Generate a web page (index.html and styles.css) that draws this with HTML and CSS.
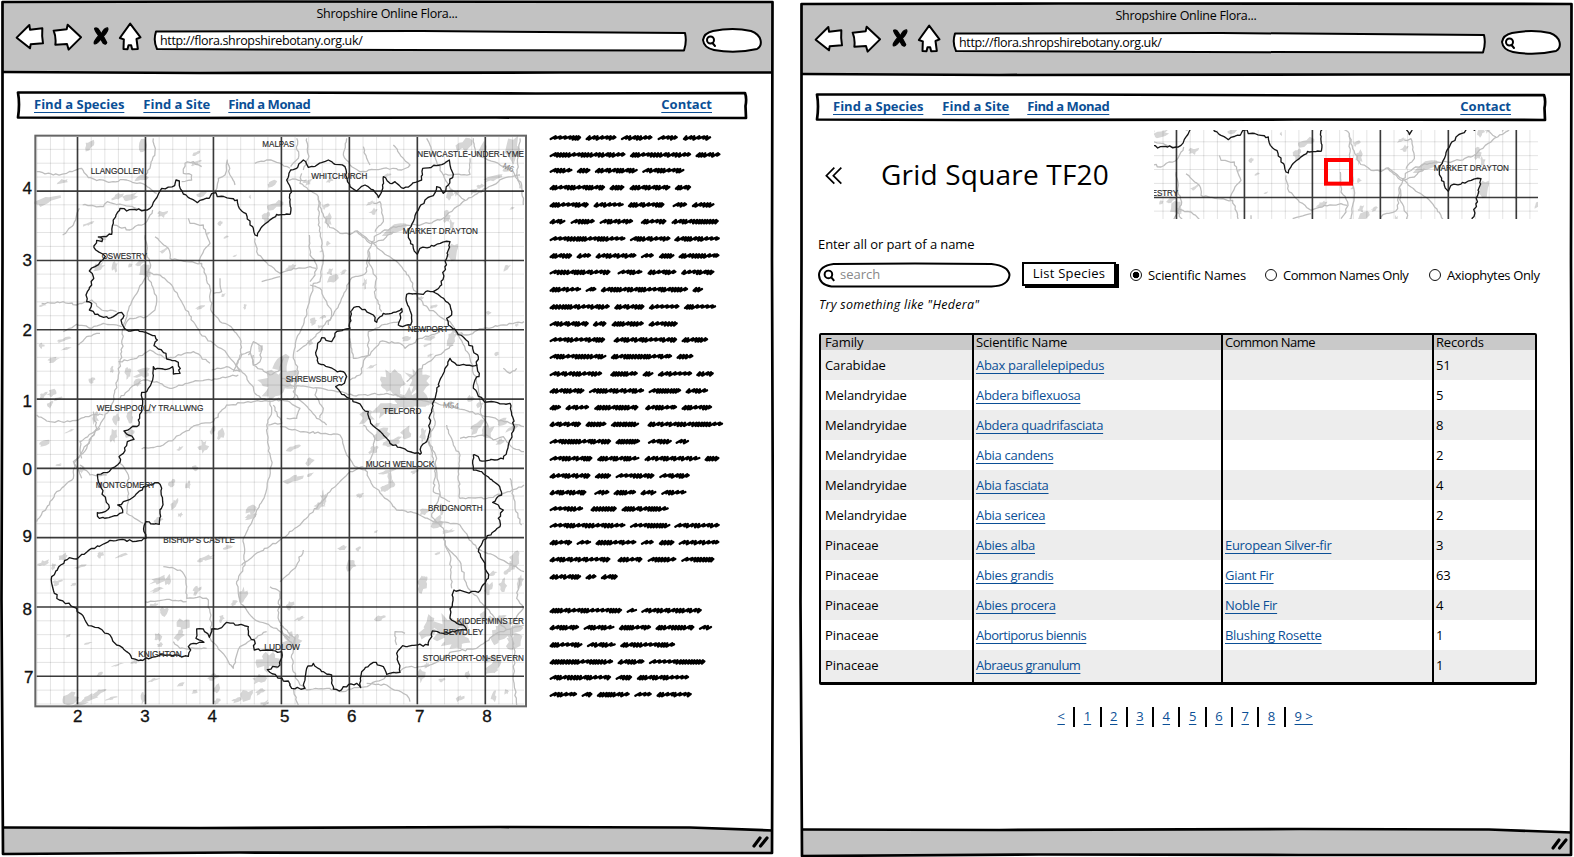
FILE: index.html
```html
<!DOCTYPE html>
<html lang="en">
<head>
<meta charset="utf-8">
<title>Shropshire Online Flora</title>
<link rel="stylesheet" href="styles.css">
</head>
<body>
<svg class="defs" aria-hidden="true">
  <symbol id="i-back" viewBox="45 66 90 90"><path d="M50 113 88 75 90 89 127 85Q125 108 129 130L92 133 90 145Z"/></symbol>
  <symbol id="i-forward" viewBox="155 66 90 90"><path d="M160 92 199 88 202 74 242 112 205 149 200 132 165 134Q168 112 160 92Z"/></symbol>
  <symbol id="i-stop" viewBox="275 71 60 75"><path class="ink" d="M286 84Q294 80 301 92L306 101Q316 81 325 83 329 90 312 108L322 127Q320 135 312 129L304 116Q293 133 285 130 282 124 298 106 285 88 286 84Z"/></symbol>
  <symbol id="i-home" viewBox="351 66 80 90"><path d="M390 71 421 112 409 117 413 147 396 148 393 136 385 136 382 148 370 147 371 118 359 114Z"/></symbol>
  <symbol id="i-lens" viewBox="0 0 36 36"><circle cx="15" cy="15" r="10.5"/><path d="M23 23 31 33"/></symbol>
  <symbol id="frame" viewBox="0 0 774 857">
    <path class="chrome" d="M3 2 772.500 2 772 73 3 72Z"/>
    <path class="chrome" d="M3 827.500 450 827.300 700 827 772 830.500V853L3 853Z"/>
    <path class="line" d="M2.500 2 260 1.500 772.500 2 772 260 773 560 772 853 500 853 240 852.500 3 854 1.500 600 2.500 260Z"/>
    <path class="line" d="M3 72 200 73 560 72.500 772.500 72.500"/>
    <path class="line" d="M3 827.500 200 828 500 827 690 827.500 772.500 830.500"/>
    <path class="grip" d="M754 846 760 838M760.500 846 767 838"/>
  </symbol>
  <symbol id="navbox" viewBox="0 0 732 30"><path class="line" d="M2 2.500 250 2.500 520 3.500 729 3Q731 8 729.500 16L730 28 480 27.500 150 28 2 27.500Q4 14 2 2.500Z"/></symbol>
</svg>

<main class="board">
  <section class="window">
    <svg class="frame"><use href="#frame"/></svg>
    <header class="title">Shropshire Online Flora...</header>
    <div class="toolbar">
      <svg class="ico"><use href="#i-back"/></svg>
      <svg class="ico forward"><use href="#i-forward"/></svg>
      <svg class="ico stop"><use href="#i-stop"/></svg>
      <svg class="ico home"><use href="#i-home"/></svg>
      <div class="url"><svg viewBox="0 0 536 24"><path d="M4 2.500 270 2 533 4Q535 13 532 21.500L250 21 5 20Q1 12 4 2.500Z"/></svg><span>http://flora.shropshirebotany.org.uk/</span></div>
      <svg class="quick" viewBox="0 0 62 27"><path d="M12 4Q32 0 50 4 58 7 59.500 13 61 19 56 22 34 27 13 23 3 21 2 13 3 6 12 4Z"/><circle cx="9.500" cy="13" r="3.500"/><path d="M11.500 16 14 19"/></svg>
    </div>
    <nav class="nav">
      <svg class="navbox" preserveAspectRatio="none"><use href="#navbox"/></svg>
      <a>Find a Species</a><a class="site">Find a Site</a><a class="monad">Find a Monad</a><a class="contact">Contact</a>
    </nav>
    <div class="content split">
      <svg class="map" viewBox="-30 0 1590 1830">
        <g id="county"></g>
        <g class="axis" id="axis"></g>
      </svg>
      <svg class="blurb" id="blurb" viewBox="0 0 600 1740"></svg>
    </div>
  </section>

  <section class="window second">
    <svg class="frame"><use href="#frame"/></svg>
    <header class="title">Shropshire Online Flora...</header>
    <div class="toolbar">
      <svg class="ico"><use href="#i-back"/></svg>
      <svg class="ico forward"><use href="#i-forward"/></svg>
      <svg class="ico stop"><use href="#i-stop"/></svg>
      <svg class="ico home"><use href="#i-home"/></svg>
      <div class="url"><svg viewBox="0 0 536 24"><path d="M4 2.500 270 2 533 4Q535 13 532 21.500L250 21 5 20Q1 12 4 2.500Z"/></svg><span>http://flora.shropshirebotany.org.uk/</span></div>
      <svg class="quick" viewBox="0 0 62 27"><path d="M12 4Q32 0 50 4 58 7 59.500 13 61 19 56 22 34 27 13 23 3 21 2 13 3 6 12 4Z"/><circle cx="9.500" cy="13" r="3.500"/><path d="M11.500 16 14 19"/></svg>
    </div>
    <nav class="nav">
      <svg class="navbox" preserveAspectRatio="none"><use href="#navbox"/></svg>
      <a>Find a Species</a><a class="site">Find a Site</a><a class="monad">Find a Monad</a><a class="contact">Contact</a>
    </nav>
    <div class="content">
      <div class="heading">
        <svg class="chevrons" viewBox="0 0 54 54"><path d="M28 2 4 26 28 50M49 2 25 26 49 50"/></svg>
        <h1>Grid Square TF20</h1>
        <svg class="minimap" viewBox="309 204 1152 267"><use href="#county"/><rect class="pick" x="825" y="294" width="75" height="71"/></svg>
      </div>
      <p class="prompt">Enter all or part of a name</p>
      <div class="controls">
        <div class="search"><svg class="pill" viewBox="0 0 193 26"><path d="M16 2Q100 1 174 2 191 4 192 13 191 24 174 24.500L14 24.500Q2 23 1.500 13 2 4 16 2Z"/></svg><svg class="lens"><use href="#i-lens"/></svg><span>search</span></div>
        <div class="button">List Species</div>
        <span class="radio"><i class="dot on"></i><b class="r1">Scientific Names</b></span>
        <span class="radio two"><i class="dot"></i><b class="r2">Common Names Only</b></span>
        <span class="radio three"><i class="dot"></i><b class="r3">Axiophytes Only</b></span>
      </div>
      <p class="hint">Try something like "Hedera"</p>
      <table class="grid">
        <colgroup><col class="c1"><col class="c2"><col class="c3"><col class="c4"></colgroup>
        <thead><tr><th>Family</th><th>Scientific Name</th><th class="tight">Common Name</th><th>Records</th></tr></thead>
        <tbody>
          <tr><td>Carabidae</td><td><a>Abax parallelepipedus</a></td><td></td><td>51</td></tr>
          <tr><td>Melandryidae</td><td><a>Abdera biflexuosa</a></td><td></td><td>5</td></tr>
          <tr><td>Melandryidae</td><td><a>Abdera quadrifasciata</a></td><td></td><td>8</td></tr>
          <tr><td>Melandryidae</td><td><a>Abia candens</a></td><td></td><td>2</td></tr>
          <tr><td>Melandryidae</td><td><a>Abia fasciata</a></td><td></td><td>4</td></tr>
          <tr><td>Melandryidae</td><td><a>Abia sericea</a></td><td></td><td>2</td></tr>
          <tr><td>Pinaceae</td><td><a>Abies alba</a></td><td><a>European Silver-fir</a></td><td>3</td></tr>
          <tr><td>Pinaceae</td><td><a>Abies grandis</a></td><td><a>Giant Fir</a></td><td>63</td></tr>
          <tr><td>Pinaceae</td><td><a>Abies procera</a></td><td><a>Noble Fir</a></td><td>4</td></tr>
          <tr><td>Pinaceae</td><td><a class="tight">Abortiporus biennis</a></td><td><a>Blushing Rosette</a></td><td>1</td></tr>
          <tr><td>Pinaceae</td><td><a class="tight">Abraeus granulum</a></td><td></td><td>1</td></tr>
        </tbody>
      </table>
      <div class="pager"><span><a>&lt;</a></span><span><a>1</a></span><span><a>2</a></span><span><a>3</a></span><span><a>4</a></span><span><a>5</a></span><span><a>6</a></span><span><a>7</a></span><span><a>8</a></span><span class="last"><a>9 &gt;</a></span></div>
    </div>
  </section>
</main>
<script src="map.js"></script>
</body>
</html>
```
FILE: styles.css
```css
* { box-sizing: border-box; }
body { margin: 0; background: #fff; color: #000; font: 500 13px/18px "Open Sans", "Noto Sans", sans-serif; overflow: hidden; }
.defs { position: absolute; width: 0; height: 0; }
.board { display: flex; gap: 25px; width: 1574px; height: 857px; overflow: hidden; }
.window { position: relative; width: 774px; height: 857px; flex: none; display: flex; flex-direction: column; }
.second { margin-top: 2px; }
.frame { position: absolute; left: 0; top: 0; width: 774px; height: 857px; z-index: -1; }
.chrome { fill: #c2c2c2; }
.line { fill: none; stroke: #000; stroke-width: 2.7; stroke-linejoin: round; }
.grip { fill: none; stroke: #000; stroke-width: 3.2; stroke-linecap: round; }
.title { height: 27px; padding-top: 5px; text-align: center; font-size: 12.5px; letter-spacing: -.25px; }
.toolbar { height: 46px; display: flex; padding: 0 0 0 15px; align-items: flex-start; }
.toolbar svg { fill: #fff; stroke: #000; stroke-linejoin: round; stroke-linecap: round; }
.ico { width: 30px; height: 30px; margin-top: -5px; stroke-width: 6; flex: none; }
.forward { margin-left: 7px; }
.stop { width: 20px; height: 25px; margin: -3px 0 0 9px; stroke-width: 4; }
.toolbar .ink { fill: #000; }
.ink { fill: #000; }
.home { width: 27px; margin-left: 6px; }
.url { position: relative; width: 536px; height: 24px; margin: 2px 0 0 8px; padding: 3px 0 0 8px; flex: none; font-size: 12.5px; letter-spacing: -.34px; }
.url svg { position: absolute; left: 0; top: 0; width: 536px; height: 24px; stroke-width: 2; z-index: -1; }
.quick { width: 62px; height: 27px; margin: 0 0 0 13px; stroke-width: 2; }
.nav { position: relative; height: 30px; margin: 17px 0 0 16px; width: 732px; display: flex; padding: 5px 0 0 18px; font-weight: 700; flex: none; }
.navbox { position: absolute; left: 0; top: 0; width: 732px; height: 30px; z-index: -1; }
a { color: #0b4f96; text-decoration: underline; text-decoration-thickness: 1px; text-underline-offset: 3px; text-decoration-skip-ink: none; white-space: nowrap; }
.site { margin-left: 19px; }
.monad { margin-left: 18px; letter-spacing: -.45px; }
.contact { margin-left: auto; margin-right: 36px; }
.split { display: flex; }
.map { width: 530px; height: 610px; margin: 5px 0 0 10px; flex: none; }
.minor { stroke: #000; stroke-opacity: .11; stroke-width: 3; }
.major { stroke: #000; stroke-opacity: .75; stroke-width: 5; }
.edge { fill: none; stroke: #666; stroke-width: 6; }
.roads { fill: none; stroke: #bdbdbd; stroke-width: 3.8; stroke-linejoin: round; }
.towns { fill: #d6d6d6; }
.border { fill: none; stroke: #161616; stroke-width: 4; stroke-linejoin: round; }
.places { font: 400 25px "Liberation Sans", Arial, sans-serif; fill: #2b2b2b; stroke: #2b2b2b; stroke-width: .5; }
.places .road { fill: #888; stroke: none; }
.axis { font: 400 51px "Liberation Sans", Arial, sans-serif; fill: #111; stroke: #111; stroke-width: 1; text-anchor: middle; }
.blurb { width: 200px; height: 580px; margin: 5px 0 0 0; flex: none; }
.blurb path { fill: none; stroke: #000; stroke-width: 7; stroke-linejoin: round; stroke-linecap: round; }
.content { flex: none; }
.second .content { padding-left: 18px; }
.heading { display: flex; align-items: flex-start; margin-top: 8px; height: 89px; }
.chevrons { width: 18px; height: 18px; margin: 37px 0 0 8px; fill: none; stroke: #000; stroke-width: 5; }
h1 { margin: 22px 0 0 38px; width: 273px; font-size: 28px; line-height: 44px; font-weight: 500; white-space: nowrap; letter-spacing: .2px; }
.minimap { width: 384px; height: 89px; }
.pick { fill: none; stroke: #f00; stroke-width: 12; }
p { margin: 0; }
.prompt { margin-top: 16px; height: 18px; letter-spacing: -.08px; padding-left: 1px; }
.controls { display: flex; height: 28px; margin-top: 8px; align-items: center; white-space: nowrap; }
.search { position: relative; width: 194px; height: 26px; padding: 3px 0 0 23px; color: #888; }
.pill { position: absolute; left: 0; top: 0; width: 194px; height: 26px; fill: #fff; stroke: #000; stroke-width: 2; z-index: -1; }
.lens { position: absolute; left: 6px; top: 7px; width: 13px; height: 13px; fill: none; stroke: #000; stroke-width: 5.500; }
.button { width: 94px; height: 24px; margin: -2px 0 0 11px; border: 2px solid #000; box-shadow: 3px 2px 0 #000; text-align: center; line-height: 19px; letter-spacing: .22px; }
.radio { display: flex; align-items: center; margin-left: 14px; width: 121px; letter-spacing: -.1px; }
.radio b { font-weight: 500; }
.two { width: 150px; letter-spacing: -.45px; }
.three { letter-spacing: -.35px; }
.dot { width: 12px; height: 12px; border: 1.500px solid #111; border-radius: 50%; margin-right: 6px; flex: none; }
.on { background: radial-gradient(#000 0 3px, #fff 3.600px); }
.hint { margin-top: 7px; padding-left: 2px; height: 18px; font-style: italic; font-size: 12.500px; letter-spacing: .28px; }
.grid { margin: 19px 0 0 2px; width: 718px; border-collapse: separate; border-spacing: 0; border: 2px solid #000; border-width: 2px 2px 3px; table-layout: fixed; border-radius: 2px; }
.c1 { width: 153px; } .c2 { width: 249px; } .c3 { width: 211px; } .c4 { width: 101px; }
th { height: 15px; padding: 0 0 0 2px; font-weight: 500; text-align: left; line-height: 15px; background: #c9c9c9; border-right: 2px solid #000; letter-spacing: -.15px; }
td { height: 30px; padding: 0 0 0 2px; border-right: 2px solid #000; letter-spacing: -.3px; }
.tight { letter-spacing: -.5px; }
th:first-child, td:first-child { padding-left: 4px; letter-spacing: -.1px; }
th:last-child, td:last-child { border-right: 0; }
tbody tr:nth-child(odd) { background: #ededed; }
tbody tr:last-child td { height: 32px; padding-bottom: 2px; }
.pager { display: flex; margin: 22px 0 0 232px; height: 20px; }
.pager span { width: 26.300px; text-align: center; border-right: 2px solid #000; line-height: 19px; }
.pager .last { border: 0; width: 36px; }
```
FILE: map.js
```js
// Small seeded generator so coastlines and roads wobble the same way on every load.
let seed = 7;
const rnd = () => (seed = (seed * 16807) % 2147483647) / 2147483647;

// Splits each segment of a point list and nudges the new points to roughen the line.
function rough(text, amount) {
  const p = text.trim().split(/\s+/).map(s => s.split(',').map(Number));
  let d = 'M' + p[0];
  for (let i = 1; i < p.length; i++) {
    const [x0, y0] = p[i - 1], [x1, y1] = p[i];
    const n = Math.max(1, Math.round(Math.hypot(x1 - x0, y1 - y0) / 9));
    for (let k = 1; k < n; k++) {
      const t = k / n;
      d += 'L' + (x0 + (x1 - x0) * t + (rnd() - .5) * amount).toFixed(1) + ',' + (y0 + (y1 - y0) * t + (rnd() - .5) * amount).toFixed(1);
    }
    d += 'L' + x1 + ',' + y1;
  }
  return d;
}

const border = [
`811,268 770,268 745,290 722,310 712,333 705,330 700,310 690,300 690,288 670,262 655,243 652,225 630,220 592,215 588,203 575,206 567,220 540,226 532,233 510,220 490,207 478,182 478,168 468,165 464,182 425,190 415,208 400,232 390,250 376,255 350,255 320,258 300,250 288,270 280,295 275,328 235,336 248,342 246,350 230,346 222,368 250,388 256,395 248,405 225,425 208,438 220,455 215,480 202,500 200,530 215,535 208,555 225,568 265,580 280,575 290,568 305,562 312,572 303,585 310,604 325,618 345,615 376,622 405,632 412,645 402,662 415,672 438,685 440,702 465,707 475,712 480,745 460,747 458,725 440,733 405,733 400,725 398,765 385,790 375,802 365,802 368,830 365,860 355,885 357,900 312,918 325,930 342,943 322,950 310,985 297,995 300,1012 275,1030 262,1043 232,1048 235,1070 268,1148 255,1160 232,1163 238,1180 275,1175 308,1163 308,1155 293,1140 310,1130 345,1112 370,1085 415,1073 425,1090 428,1130 420,1165 418,1198 378,1190 372,1220 378,1240 365,1247 270,1246 245,1260 215,1270 170,1302 148,1298 122,1320 95,1355 95,1375 103,1405 118,1425 170,1450 195,1485 205,1502 235,1508 270,1530 290,1560 320,1580 335,1600 362,1605 430,1590 505,1594 512,1575 505,1565 520,1555 552,1552 528,1540 530,1512 550,1512 568,1537 575,1512 605,1508 620,1492 655,1500 685,1505 685,1530 703,1545 703,1575 750,1575 785,1580 780,1620 742,1634 790,1668 805,1668 815,1690 855,1690 850,1680 860,1630 880,1615 905,1640 935,1650 940,1692 958,1698 970,1685 1010,1675 1022,1688 1025,1640 1060,1612 1090,1625 1100,1648 1140,1642 1130,1585 1148,1562 1225,1560 1237,1518 1270,1525 1340,1515 1330,1500 1290,1480 1300,1400 1302,1395 1340,1402 1375,1402 1405,1360 1395,1315 1375,1280 1390,1245 1440,1205 1435,1180 1450,1155 1435,1140 1418,1132 1445,1110 1435,1080 1395,1050 1385,1040 1360,1035 1360,990 1375,995 1380,1007 1450,1002 1465,960 1483,905 1475,870 1470,835 1395,832 1360,790 1365,765 1378,745 1370,720 1375,695 1345,650 1310,620 1285,600 1280,580 1295,570 1290,540 1240,500 1265,480 1280,400 1290,350 1200,370 1192,388 1180,370 1165,330 1165,320 1180,290 1195,255 1215,225 1240,212 1250,185 1260,188 1270,205 1285,180 1300,148 1288,105 1250,122 1208,130 1205,165 1150,190 1125,170 1110,175 1090,155 1085,200 1075,218 1060,195 1035,180 1010,198 990,185 977,150 975,125 940,115 925,105 880,125 865,127 850,105 830,130 812,135 800,165 812,190 811,268`,
`1240,500 1217,500 1210,508 1160,508 1158,520 1175,570 1172,600 1140,603 1135,600 1145,550 1115,565 1090,565 1070,592 1060,570 1035,553 1010,545 992,560 990,610 945,625 935,650 905,638 893,655 888,690 895,715 945,735 975,745 980,755 965,780 947,785 960,800 1045,860 1052,895 1060,903 1100,940 1110,955 1150,970 1200,988 1203,965 1220,950 1230,895 1230,870 1250,800 1262,760 1290,700 1310,720 1372,720`];

const roads = [
'50,140 100,150 140,145 185,130 205,158 260,170 320,165 376,180 410,205', '400,40 405,80 392,120 376,150',
'128,330 160,300 178,250', '188,240 250,245 262,230 310,240 376,255', '280,300 330,315 380,290 398,255',
'376,440 420,450 455,480 485,530 520,590 540,625 580,655 620,685 655,730 680,755 710,810 740,825 785,822',
'376,440 395,480 410,520 405,555 380,575 330,580 310,610 305,680 295,750 280,830 240,900 200,960 165,1010 160,1060 110,1100 50,1190',
'376,330 380,380 392,420 380,450 340,520 310,600', '405,335 445,370 450,400 500,410 545,415 570,490 575,560 600,590 625,600 660,640 665,690 650,720 660,740 620,725 575,735',
'505,280 510,295 550,300 560,330 570,355 545,390 538,415', '600,460 605,500 580,505', '485,170 515,165 515,150 490,145 495,115 520,110 545,125',
'585,205 595,160 615,150 622,105 630,150 645,180', '705,340 710,380 745,420 780,445 820,430 870,425 888,430', '725,470 780,455',
'705,115 740,105 770,112 810,130', '830,40 835,100 812,125', '860,40 865,100 850,135', '800,165 860,165',
'845,145 840,175 865,195 895,215 905,260 925,300 960,325 990,328 1012,318 1035,335 1080,375 1140,420 1170,460 1190,510 1210,540 1260,575 1290,590 1320,640 1350,700 1375,790 1385,870 1405,905',
'895,215 895,300 905,345 910,400 900,470 880,475 865,540 850,600 830,640 820,690 835,740 820,800 890,880 920,900',
'868,330 870,390 890,420 885,450 870,470', '870,480 900,490 920,530 935,560 925,600', '990,465 940,570 880,640 830,680', '1045,375 1040,440 990,465',
'1045,375 1070,330 1120,305 1190,300 1260,285 1310,245 1340,225 1400,190 1450,160 1500,150', '1060,235 1080,230 1090,290 1065,320',
'1045,375 1050,420 1070,460 1065,510 1085,560', '1010,318 1050,355 1090,345 1120,320', '980,40 970,90 990,120 1020,140 1090,130 1145,135 1170,120 1150,100 1120,60',
'1050,120 1040,100 1030,65', '1220,40 1250,110 1290,190 1335,225', '1360,40 1370,90 1440,120 1480,140 1505,180 1510,240', '1270,150 1350,148 1350,100',
'1500,40 1495,80 1490,150 1500,190', '1300,620 1340,630 1390,610 1450,600 1512,590', '1160,770 1190,740 1240,700 1300,660', '990,640 1000,700 1050,690 1080,650 1140,655 1155,670 1200,640 1260,620',
'990,765 1020,750 1035,700 1050,690', '1045,690 1045,620 1085,600 1140,590', '785,780 860,785 960,800 1000,812 1100,805 1190,825 1300,845 1400,875 1512,905', '785,825 820,820 830,770 785,760',
'300,820 330,790 370,765 410,770 450,790 520,770 600,760 655,750', '295,710 350,700 390,675 440,700 520,680 570,715', '685,690 700,650 725,665 720,710 700,720 690,680 660,690 640,740',
'700,690 700,720 750,750 780,735 790,700', '130,620 170,598 215,610 250,595 305,605', '175,660 200,635 240,625', '65,535 130,530 170,540 215,525 245,555 290,560',
'50,870 90,890 150,890 215,870 250,870', '220,860 230,910 200,970 160,1010 185,1060', '365,972 430,960 480,930 530,900 580,890 620,840 700,830 785,825',
'740,900 745,960 755,1020 735,1110 700,1180 670,1240 675,1320 650,1370 660,1430 700,1480 770,1510 810,1540', '745,900 785,895 760,840', '665,1320 720,1280 780,1245 840,1200 930,1100 990,1040 1030,1025',
'430,1325 480,1335 498,1360 500,1420 540,1415 565,1425 575,1500 570,1540 620,1600 640,1630 650,1590 660,1565 740,1520', '375,1430 430,1425 500,1430', '460,1550 480,1570 560,1570',
'750,1385 780,1400 775,1470 790,1530 820,1560', '300,1015 325,1050 325,1130 320,1165 370,1195', '180,1020 210,1050 260,1050', '185,1000 180,950 240,910',
'780,905 850,920 960,930 980,990 1005,1025 1035,1035 1060,1085 1110,1130 1130,1155 1190,1165 1240,1190 1320,1200 1370,1270 1420,1290 1512,1340',
'780,1370 825,1330 850,1275', '1035,1035 1060,980 1065,940 1030,900', '1225,950 1240,1000 1255,1070 1260,1110 1235,1175 1270,1210 1275,1260 1320,1310 1340,1380 1380,1430 1400,1450',
'1270,1240 1290,1290 1295,1390', '1280,900 1300,960 1320,990 1315,1040 1320,1120 1400,1120 1470,1100 1512,1080', '1320,940 1400,930 1420,945 1450,935 1480,970 1512,980', '1240,850 1245,900 1225,940 1250,1000 1240,1100 1290,1130',
'780,1500 825,1540 815,1590 820,1640 840,1680 860,1695 920,1690 960,1700 1050,1680 1150,1630 1230,1620 1300,1580 1370,1570 1440,1520 1512,1500', '1470,1510 1485,1580 1480,1650 1490,1740', '1040,1675 1100,1680 1160,1710 1170,1730',
'820,1690 835,1740', '1500,1360 1490,1420 1510,1450 1470,1500', '1400,1450 1425,1480 1460,1515', '740,900 755,860 750,830', '785,820 840,850 830,880 800,880', '890,790 885,810 910,850 900,880', '1130,1560 1125,1520 1155,1525',
'1470,1060 1485,1150 1505,1200', '1450,730 1470,745 1490,730'];

// x, y, rx, ry of built-up areas and woodland; a fifth value marks a large town
const towns = [[780,765,65,35,1],[785,720,25,30],[765,800,35,25],[1115,775,45,40,1],[1195,770,40,50,1],[1170,830,50,40,1],[1100,850,40,25],[1040,875,30,20],[1120,315,35,15],[1300,378,20,25],[1295,638,18,25],[1480,75,30,45],[1330,60,25,20],[1390,70,20,25],
[80,225,40,14],[130,170,22,8],[205,60,18,16],[370,62,15,22],[365,160,20,10],[330,215,25,12],[295,215,20,10],[425,268,18,12],[205,297,18,6],[250,340,18,10],[235,425,22,12],[285,425,10,16],[330,420,10,6],[375,440,20,25],[360,415,18,8],[430,378,14,10],[525,115,20,8],[530,85,14,6],[540,548,14,6],[545,205,15,10],[600,295,8,10],[565,325,8,4],[620,335,10,5],[645,393,8,4],[675,545,5,8],[610,510,8,5],[768,240,25,14],[740,275,14,18],[690,215,4,8],[755,175,20,10],[70,540,12,5],[130,645,22,7],[65,662,10,9],[100,705,18,8],[140,670,16,5],[70,810,15,10],[95,805,15,12],[90,840,12,14],[115,820,16,5],[215,765,10,10],[370,745,28,16],[350,775,16,12],[275,735,8,12],[325,745,10,25],[225,878,12,24],[330,880,15,25],[290,880,12,20],[385,860,12,8],
[280,935,15,25],[325,925,18,12],[150,918,20,5],[70,955,18,10],[115,1020,15,4],[185,1035,9,12],[550,965,16,22],[600,930,12,20],[580,915,12,12],[480,970,10,7],[525,1030,12,10],[455,1075,12,12],[505,1080,10,14],[465,1135,15,18],[480,1170,8,8],[415,1185,15,9],[695,1155,16,18],[690,1175,20,8],[600,1240,25,8],[625,1265,15,7],[560,1300,25,8],[540,1305,12,8],[130,1295,15,12],[70,1315,20,10],[100,1325,10,10],[180,1325,18,5],[240,1290,12,10],[305,1292,20,5],[110,1372,18,10],[160,1378,10,6],[415,1365,26,12],[410,1395,20,7],[445,1365,10,18],[400,1440,14,6],[430,1460,22,18],[490,1500,20,22],[480,1530,18,16],[415,1535,12,18],[420,1560,12,8],[530,1395,14,14],[670,1410,14,22],[640,1435,12,8],[605,1480,8,12],[145,1532,10,5],[205,1555,14,5],[290,1620,20,4],[345,1610,15,8],[240,1645,14,7],[150,1720,25,18],[205,1720,30,14],[240,1700,22,10],[180,1735,30,8],[275,1720,18,5],[370,1720,8,18],[400,1665,20,6],[480,1680,16,6],[525,1700,10,7],[580,1655,18,10],[590,1690,10,16],[590,1730,12,10],[680,1710,20,18],[720,1660,22,18],[745,1610,35,28,1],[720,1700,15,10],[735,1735,15,10],[650,1725,14,8],
[815,1550,28,28,1],[810,1440,12,18],[840,1480,16,7],[870,1010,14,12],[820,1060,30,14],[820,970,20,10],[870,1050,14,7],[1110,1080,22,15],[1110,1060,8,22],[1095,1090,14,10],[1020,1112,14,8],[910,1120,10,24,1],[900,1140,20,12],[1068,1220,8,5],[995,1320,15,22],[1015,1272,9,8],[965,1270,14,8],[1205,1380,16,24],[1215,1360,12,10],[1255,1285,10,6],[1210,1160,18,14],[1250,1190,24,18],[1285,1220,20,8],[1265,1150,10,20],[1210,930,12,25],[1160,925,20,20],[1120,950,30,12],[1080,930,30,18],[1070,900,15,8],[1060,975,14,12],[1400,920,30,25],[1370,905,25,20],[1440,950,15,10],[1475,910,25,12],[1285,1520,55,50,1],[1230,1490,20,35],[1220,1520,24,22],[1310,1550,45,25,1],[1330,1500,22,18],[1220,1620,12,8],[1205,1650,14,20],[1430,1620,16,22],[1410,1600,20,10],[1465,1520,40,30,1],[1430,1530,25,30],[1480,1550,25,24],[1440,1480,22,14],[1420,1630,25,14],[1485,1300,18,22],[1480,1320,14,18],[1405,1390,14,20],[1450,1380,14,20],[1420,1345,14,10],[1500,1370,12,22],[1460,1340,12,10],[1410,1480,14,10],[1390,1470,10,14],[1340,1650,10,14],[1420,1715,12,18],[1460,1700,10,10],[1320,1720,12,12],[1265,1665,12,8],[1080,1480,18,9],[1100,1040,30,6],[1185,1040,14,7],[1350,820,14,10],[1290,835,15,5],[1230,830,14,14],[1450,890,18,10],
[930,165,12,8],[865,170,16,12],[925,285,12,22],[915,245,12,8],[925,355,8,8],[905,378,6,5],[815,425,18,10],[940,460,24,12],[930,440,10,12],[970,440,12,7],[1035,475,8,16],[1060,260,14,10],[1050,235,14,7],[1100,150,16,6],[1280,275,14,22],[1290,210,12,16],[1310,205,10,8],[1295,300,10,20],[1420,160,30,8],[1360,200,14,10],[1380,185,12,10],[1460,130,14,10],[1460,428,14,10],[1395,408,6,5],[1430,688,8,7],[1405,565,10,7],[1160,640,18,8],[1240,545,14,7],[1200,520,12,5],[880,590,14,12],[900,605,12,7],[910,575,12,8],[870,650,12,10],[1055,725,16,5],[1230,640,18,7],[1220,660,14,5],[1230,690,12,5],[1080,850,20,8],[720,670,10,12],[1380,840,12,10],[1475,250,8,5],[1490,600,8,5]];

function blob([x, y, rx, ry, big]) {
  const n = big ? 22 : 12, a0 = rnd() * 6, skew = big ? 0 : .3;
  let d = '';
  for (let i = 0; i < n; i++) {
    const a = a0 + i / n * 6.283, r = .4 + rnd() * .8;
    const px = Math.cos(a) * rx * r, py = Math.sin(a) * ry * r;
    d += (i ? 'L' : 'M') + (x + px).toFixed(1) + ',' + (y + py - px * skew).toFixed(1);
  }
  return d + 'Z';
}

const places = [['LLANGOLLEN',212,147,160],['MALPAS',727,67,96],['WHITCHURCH',874,162,168],['NEWCASTLE-UNDER-LYME',1192,97,320],['MARKET DRAYTON',1148,327,226],['OSWESTRY',245,403,136],['NEWPORT',1163,621,122],['SHREWSBURY',797,771,174],['TELFORD',1090,867,114],['WELSHPOOL/Y TRALLWNG',230,858,320],['MUCH WENLOCK',1037,1027,206],['MONTGOMERY',227,1089,180],['BRIDGNORTH',1224,1159,164],['BISHOP\'S CASTLE',430,1254,215],['KIDDERMINSTER',1310,1498,202],['BEWDLEY',1270,1531,120],['STOURPORT-ON-SEVERN',1208,1608,304],['KNIGHTON',355,1596,130],['LUDLOW',733,1576,107]];

let s = '';
const range = (a, b, step) => { const r = []; for (let v = a; v <= b; v += step) r.push(v); return r; };
s += '<g class="towns">' + towns.map(t => `<path d="${blob(t)}"/>`).join('') + '</g>';
s += '<path class="minor" d="' + range(50.6, 1510, 40.77).map(x => `M${x.toFixed(1)},36V1738`).join('') + range(73, 1740, 41.6).map(y => `M50,${y.toFixed(1)}H1512`).join('') + '"/>';
s += '<g class="roads">' + roads.map(r => `<path d="${rough(r, 6)}"/>`).join('') + '</g>';
s += '<path class="major" d="' + range(172.5, 1400, 203.9).map(x => `M${x.toFixed(1)},36V1738`).join('') + range(198.5, 1700, 207.9).map(y => `M50,${y.toFixed(1)}H1512`).join('') + '"/>';
s += '<rect class="edge" x="46" y="32" width="1472" height="1712"/>';
s += '<g class="border">' + border.map(b => `<path d="${rough(b, 7)}"/>`).join('') + '</g>';
s += '<g class="places">' + places.map(p => `<text x="${p[1]}" y="${p[2]}" textLength="${p[3]}" lengthAdjust="spacingAndGlyphs">${p[0]}</text>`).join('');
s += '<text class="road" transform="translate(1446 128) rotate(25)">M6</text><text class="road" transform="translate(1268 848) rotate(4)">M54</text></g>';
document.getElementById('county').innerHTML = s;

const rows = [['4',208],['3',422],['2',634],['1',846],['0',1049],['9',1251],['8',1469],['7',1675]];
const cols = [['2',173],['3',375],['4',577],['5',794],['6',995],['7',1199],['8',1401]];
document.getElementById('axis').innerHTML = rows.map(r => `<text x="${r[0] === '7' ? 26 : 22}" y="${r[1]}">${r[0]}</text>`).join('') + cols.map(c => `<text x="${c[1]}" y="1792">${c[0]}</text>`).join('');

// Placeholder copy: y, then start-end of each scribbled word
const copy = `39 30-122 138-228 244-336 354-412 430-512
90 30-255 271-452 468-540
137 30-96 112-150 166-292 308-432
188 30-194 210-252 270-390 406-452
240 30-145 162-250 265-372 399-440 457-522
290 30-75 93-163 180-278 304-378 396-535
342 30-255 271-390 404-538
393 30-95 111-152 168-288 304-340 358-402 417-537
442 30-210 234-306 324-408 425-522
494 30-122 138-168 184-443 459-488
546 30-208 224-312 328-417 433-527
597 30-145 160-198 216-310 327-412
645 30-194 222-410 426-503
695 30-198 214-395 411-459
747 30-185 212-292 309-339 355-455 470-520
798 30-132 148-311 327-422 438-503
848 30-62 78-146 164-294 317-410 426-515
898 30-122 138-198 214-296 324-548
950 30-212 228-299 325-394 408-446
1001 30-156 173-297 315-480 495-537
1053 30-150 166-212 228-342 359-448
1103 30-138 164-207 222-287 303-348 365-438
1152 30-128 153-229 246-385
1202 30-255 271-390 404-538
1253 30-95 111-152 168-288 304-340 358-402 417-537
1304 30-210 234-306 324-408 425-522
1356 30-122 138-168 184-232
1457 30-245 261-290 305-484
1508 30-116 132-222 238-332 348-462 478-515
1560 30-126 142-226 242-404
1611 30-218 234-312 328-495
1658 30-212 228-275 292-446
1709 30-110 126-156 172-268 284-334 351-454`;
let d = '';
copy.split('\n').forEach(line => {
  const [y, ...words] = line.split(' ');
  words.forEach(w => {
    const [a, b] = w.split('-').map(Number);
    let x = a + 2;
    d += `M${x},${+y + 3}`;
    while (x < b - 12) {
      // Tall narrow strokes for letters, long shallow ones for the joins between them.
      const join = rnd() < .35;
      x = Math.min(b - 6, x + (join ? 15 : 7 + rnd() * 3));
      d += `L${x.toFixed(1)},${+y - 5}l-3,${join ? 7 : 10}`;
    }
    d += `L${b - 2},${+y - 2}`;
  });
});
document.getElementById('blurb').innerHTML = `<path d="${d}"/>`;
```
